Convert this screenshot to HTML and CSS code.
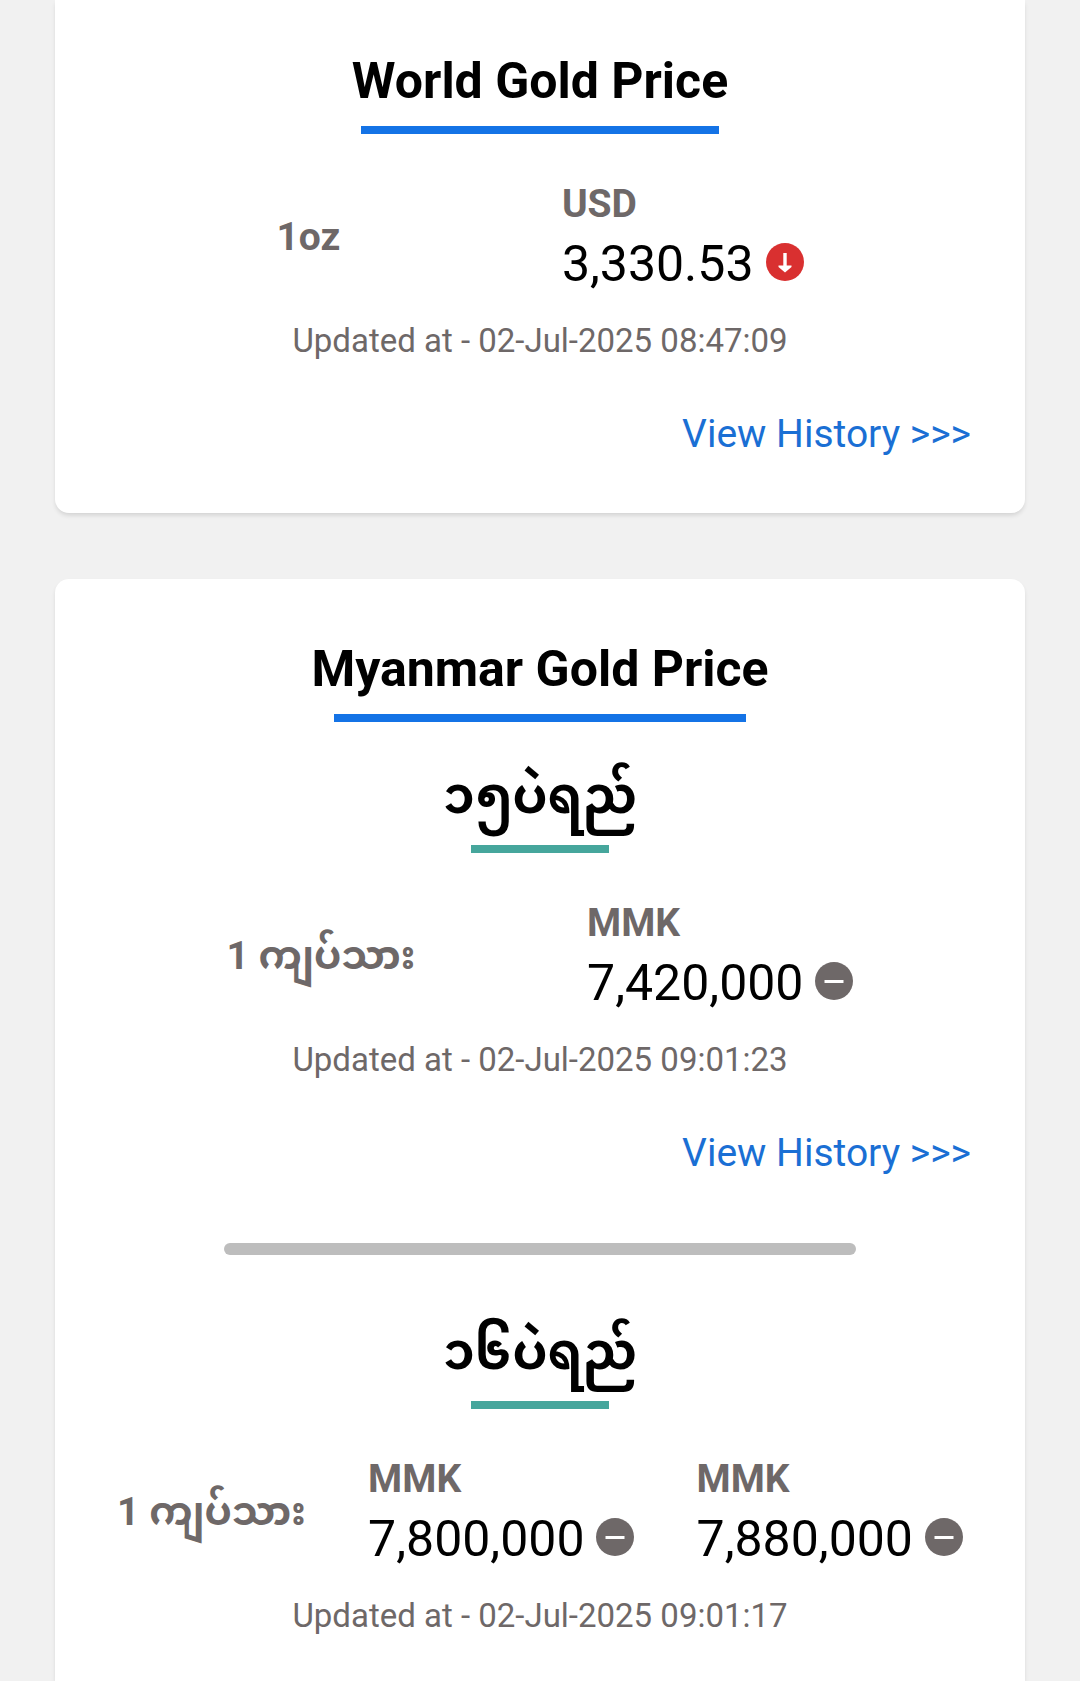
FILE: index.html
```html
<!DOCTYPE html>
<html lang="en">
<head>
<meta charset="utf-8">
<meta name="viewport" content="width=device-width, initial-scale=1">
<title>Gold Price</title>
<link rel="stylesheet" href="styles.css">
</head>
<body>
<main class="page">
  <section class="card card-first">
    <h1 class="title title-world">World Gold Price</h1>
    <div class="rates">
      <span class="unit">1oz</span>
      <div class="rate">
        <span class="currency">USD</span>
        <div class="price"><span>3,330.53</span>
          <svg class="icon" viewBox="0 0 38 38" aria-label="down"><circle cx="19" cy="19" r="19" fill="#d93030"/><path d="M17.300 10h3.400v12.500h4.800v1.500L19 29.500 12.500 24v-1.500h4.800z" fill="#fff"/></svg>
        </div>
      </div>
    </div>
    <p class="updated">Updated at - 02-Jul-2025 08:47:09</p>
    <a class="history" href="#">View History &gt;&gt;&gt;</a>
  </section>
  <section class="card card-last">
    <h1 class="title title-myanmar">Myanmar Gold Price</h1>
    <h2 class="grade" lang="my">၁၅ပဲရည်</h2>
    <div class="rates">
      <span class="unit" lang="my">1 ကျပ်သား</span>
      <div class="rate">
        <span class="currency">MMK</span>
        <div class="price"><span>7,420,000</span>
          <svg class="icon" viewBox="0 0 38 38" aria-label="unchanged"><circle cx="19" cy="19" r="19" fill="#6e6868"/><path d="M9.500 19.500h19" stroke="#fff" stroke-width="3"/></svg>
        </div>
      </div>
    </div>
    <p class="updated">Updated at - 02-Jul-2025 09:01:23</p>
    <a class="history" href="#">View History &gt;&gt;&gt;</a>
    <hr class="divider">
    <h2 class="grade" lang="my">၁၆ပဲရည်</h2>
    <div class="rates">
      <span class="unit" lang="my">1 ကျပ်သား</span>
      <div class="rate">
        <span class="currency">MMK</span>
        <div class="price"><span>7,800,000</span>
          <svg class="icon" viewBox="0 0 38 38" aria-label="unchanged"><circle cx="19" cy="19" r="19" fill="#6e6868"/><path d="M9.500 19.500h19" stroke="#fff" stroke-width="3"/></svg>
        </div>
      </div>
      <div class="rate">
        <span class="currency">MMK</span>
        <div class="price"><span>7,880,000</span>
          <svg class="icon" viewBox="0 0 38 38" aria-label="unchanged"><circle cx="19" cy="19" r="19" fill="#6e6868"/><path d="M9.500 19.500h19" stroke="#fff" stroke-width="3"/></svg>
        </div>
      </div>
    </div>
    <p class="updated">Updated at - 02-Jul-2025 09:01:17</p>
  </section>
</main>
</body>
</html>
```
FILE: styles.css
```css
* { box-sizing: border-box; }
body { margin: 0; background: #f1f1f1; color: #000; font-family: Roboto, "Noto Sans Myanmar", "Noto Sans", sans-serif; }
.page { display: flex; flex-direction: column; gap: 66px; min-height: 100vh; padding: 0 55px; }
.card { display: flex; flex-direction: column; align-items: center; padding: 56px 0 54px; background: #fff; border-radius: 14px; box-shadow: 0 3px 5px -1px rgba(0,0,0,.14); }
.card-first { border-radius: 0 0 14px 14px; padding-top: 47px; }
.card-last { flex: 1; border-radius: 14px 14px 0 0; padding-bottom: 40px; }
.title { margin: 0; font-size: 50px; line-height: 68px; font-weight: 700; white-space: nowrap; }
.title::after, .grade::after { content: ""; display: block; height: 8px; margin: 11px auto 0; background: #1473e6; }
.title-world::after { width: 358px; }
.title-myanmar::after { width: 412px; }
.grade { margin: 33px 0 0; font-size: 50px; line-height: 82px; font-weight: 700; }
.grade::after { width: 138px; margin-top: 8px; background: #46a69c; }
.rates { display: flex; justify-content: space-evenly; align-items: center; align-self: stretch; margin-top: 46px; }
.unit { margin-bottom: 6px; color: #6e6868; font-size: 39px; line-height: 60px; font-weight: 700; white-space: nowrap; }
.rate { display: flex; flex-direction: column; }
.currency { color: #6e6868; font-size: 39px; line-height: 48px; font-weight: 700; }
.price { display: flex; align-items: center; gap: 12px; font-size: 50px; line-height: 72px; }
.icon { width: 38px; height: 38px; margin-bottom: 5px; }
.updated { margin: 17px 0 0; color: #6e6868; font-size: 33px; line-height: 48px; white-space: nowrap; }
.history { align-self: flex-end; margin: 44px 54px 0; color: #1a6fd4; font-size: 39px; line-height: 50px; text-decoration: none; }
.divider { width: 632px; max-width: 100%; height: 12px; margin: 65px 0 23px; border: 0; border-radius: 6px; background: #bdbdbd; }
```
